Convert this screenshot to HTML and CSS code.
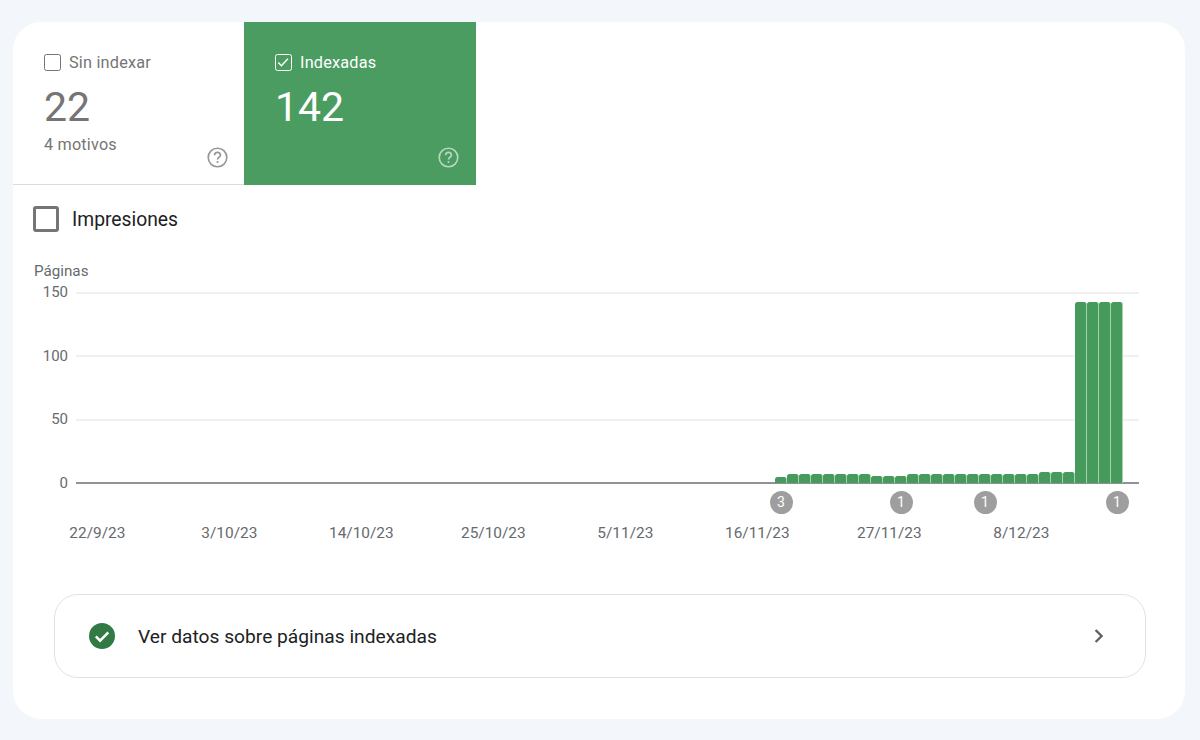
FILE: index.html
```html
<!DOCTYPE html>
<html lang="es">
<head>
    <meta charset="UTF-8">
    <meta name="viewport" content="width=device-width, initial-scale=1.0">
    <title>Indexación de páginas</title>
    <link rel="stylesheet" href="styles.css">
</head>
<body>

    <main class="card">
        <!-- Tabs -->
        <div class="tabs">
            <div class="tab">
                <div class="tab-label">
                    <span class="tick"></span>
                    <span>Sin indexar</span>
                </div>
                <div class="tab-value">22</div>
                <div class="tab-note">4 motivos</div>
                <svg class="help" viewBox="0 0 24 24"><circle cx="12" cy="12" r="10.6" fill="none" stroke="currentColor" stroke-width="1.9"/><path d="M8.7 9.4a3.3 3.3 0 0 1 6.6 0c0 2.3-3.3 2.4-3.3 4.9" fill="none" stroke="currentColor" stroke-width="1.9"/><circle cx="12" cy="17.2" r="1.2" fill="currentColor"/></svg>
            </div>
            <div class="tab tab-on">
                <div class="tab-label">
                    <span class="tick">
                        <svg viewBox="0 0 16 16"><path d="M2.6 8.6l3.6 3.6 7.4-8" fill="none" stroke="currentColor" stroke-width="1.7"/></svg>
                    </span>
                    <span>Indexadas</span>
                </div>
                <div class="tab-value">142</div>
                <svg class="help" viewBox="0 0 24 24"><circle cx="12" cy="12" r="10.6" fill="none" stroke="currentColor" stroke-width="1.9"/><path d="M8.7 9.4a3.3 3.3 0 0 1 6.6 0c0 2.3-3.3 2.4-3.3 4.9" fill="none" stroke="currentColor" stroke-width="1.9"/><circle cx="12" cy="17.2" r="1.2" fill="currentColor"/></svg>
            </div>
        </div>

        <!-- Impresiones -->
        <div class="option">
            <span class="option-box"></span>
            <span>Impresiones</span>
        </div>

        <!-- Chart -->
        <div class="chart">
            <div class="chart-title">Páginas</div>
            <div class="chart-body">
                <div class="y-axis">
                    <span>150</span>
                    <span>100</span>
                    <span>50</span>
                    <span>0</span>
                </div>
                <div class="plot">
                    <div class="grid-line"></div>
                    <div class="grid-line"></div>
                    <div class="grid-line"></div>
                    <div class="bars" id="bars"></div>
                </div>
            </div>
            <div class="markers" id="markers"></div>
            <div class="x-axis">
                <span>22/9/23</span>
                <span>3/10/23</span>
                <span>14/10/23</span>
                <span>25/10/23</span>
                <span>5/11/23</span>
                <span>16/11/23</span>
                <span>27/11/23</span>
                <span>8/12/23</span>
            </div>
        </div>

        <!-- Link -->
        <div class="link-row">
            <svg class="ok" viewBox="0 0 26 26"><circle cx="13" cy="13" r="13" fill="#317a45"/><path d="M6.8 13.4l4.3 4.3 8.2-8.4" fill="none" stroke="#fff" stroke-width="2.5"/></svg>
            <span class="link-text">Ver datos sobre páginas indexadas</span>
            <svg class="chevron" viewBox="0 0 12 16"><path d="M2.6 2l6 6-6 6" fill="none" stroke="currentColor" stroke-width="2.4"/></svg>
        </div>
    </main>

    <script>
        // bar heights in px, one per day
        let heights = [6];
        for (let i = 0; i < 7; i++) heights.push(9);
        for (let i = 0; i < 3; i++) heights.push(7.5);
        for (let i = 0; i < 11; i++) heights.push(9);
        for (let i = 0; i < 3; i++) heights.push(11.5);
        for (let i = 0; i < 4; i++) heights.push(181);

        let bars = document.getElementById("bars");
        for (let i = 0; i < heights.length; i++) {
            let bar = document.createElement("div");
            bar.className = "bar";
            bar.style.height = heights[i] + "px";
            bars.appendChild(bar);
        }

        // [bar number, count]
        let notes = [[1, 3], [11, 1], [18, 1], [29, 1]];
        let markers = document.getElementById("markers");
        for (let i = 0; i < notes.length; i++) {
            let m = document.createElement("div");
            m.className = "marker";
            m.style.gridColumn = notes[i][0];
            m.innerText = notes[i][1];
            markers.appendChild(m);
        }
    </script>

</body>
</html>
```

FILE: styles.css
```css
body {
    margin: 0;
    padding: 22px 15px 21px 13px;
    background-color: #f3f6fb;
    font-family: Roboto, "Liberation Sans", sans-serif;
    color: #202124;
}

.card {
    height: 697px;
    box-sizing: border-box;
    background-color: #fff;
    border-radius: 28px;
    overflow: hidden;
}

/* Tabs */
.tabs {
    display: flex;
    height: 163px;
}
.tab {
    position: relative;
    display: flex;
    flex-direction: column;
    width: 231px;
    box-sizing: border-box;
    padding: 31px 17px 0 31px;
    border-bottom: 1px solid #dadce0;
    color: #757575;
}
.tab-on {
    width: 232px;
    border-bottom: none;
    background-color: #4a9c61;
    color: #fff;
}
.tab-label {
    display: flex;
    align-items: center;
    gap: 8px;
    height: 18px;
    font-size: 16.3px;
    letter-spacing: 0.2px;
}
.tick {
    width: 17px;
    height: 17px;
    box-sizing: border-box;
    border: 1.7px solid currentColor;
    border-radius: 2.5px;
}
.tick svg {
    display: block;
    width: 14px;
    height: 14px;
}
.tab-value {
    margin-top: 13px;
    font-size: 41px;
    line-height: 47px;
}
.tab-note {
    margin-top: 4px;
    font-size: 16.2px;
    line-height: 20px;
    letter-spacing: 0.2px;
}
.help {
    position: absolute;
    right: 16px;
    bottom: 16px;
    width: 21px;
    height: 21px;
    opacity: 0.75;
}
.tab-on .help {
    right: 17px;
    bottom: 17px;
    opacity: 0.6;
}

/* Impresiones */
.option {
    display: flex;
    align-items: center;
    gap: 13px;
    margin: 21px 0 0 20px;
    height: 26px;
    font-size: 19.3px;
}
.option-box {
    width: 26px;
    height: 26px;
    box-sizing: border-box;
    border: 3px solid #757575;
    border-radius: 3px;
}

/* Chart */
.chart {
    margin: 0 46px 0 21px;
    color: #666a6e;
    font-size: 15px;
}
.chart-title {
    margin-top: 30px;
    font-size: 15.2px;
    line-height: 18px;
}
.chart-body {
    display: flex;
    margin-top: 12px;
}
.y-axis {
    display: flex;
    flex-direction: column;
    justify-content: space-between;
    width: 34px;
    margin: -9px 8px -9px 0;
    height: 209px;
    text-align: right;
    line-height: 18px;
}
.plot {
    position: relative;
    display: flex;
    flex-direction: column;
    flex: 1;
    height: 192px;
    border-bottom: 2px solid #8f9296;
    box-sizing: border-box;
}
.grid-line {
    flex: 1;
    border-top: 2px solid #eef0f1;
}
.bars {
    position: absolute;
    left: 699px;
    bottom: -1px;
    display: flex;
    align-items: flex-end;
}
.bar {
    width: 12px;
    box-sizing: border-box;
    background-color: #459a5c;
    border-right: 1px solid #a5d3b1;
    border-radius: 2.5px 2.5px 0 0;
}
.markers {
    display: grid;
    grid-template-columns: repeat(29, 12px);
    height: 23px;
    margin: 7px 0 0 741px;
}
.marker {
    grid-row: 1;
    justify-self: center;
    width: 23px;
    height: 23px;
    border-radius: 50%;
    background-color: #9e9e9e;
    color: #fff;
    font-size: 14px;
    line-height: 23px;
    text-align: center;
}
.x-axis {
    display: grid;
    grid-template-columns: repeat(8, 132px);
    margin: 10px 0 0 -2.7px;
    font-size: 15.4px;
    line-height: 18px;
    text-align: center;
}

/* Link */
.link-row {
    display: flex;
    align-items: center;
    height: 84px;
    box-sizing: border-box;
    margin: 52px 39px 0 41px;
    padding: 0 40px 0 34px;
    border: 1.5px solid #dfe1e5;
    border-radius: 24px;
}
.ok {
    width: 26px;
    height: 26px;
}
.link-text {
    flex: 1;
    margin-left: 23px;
    font-size: 19.2px;
}
.chevron {
    width: 12px;
    height: 16px;
    color: #5f6368;
}
```
